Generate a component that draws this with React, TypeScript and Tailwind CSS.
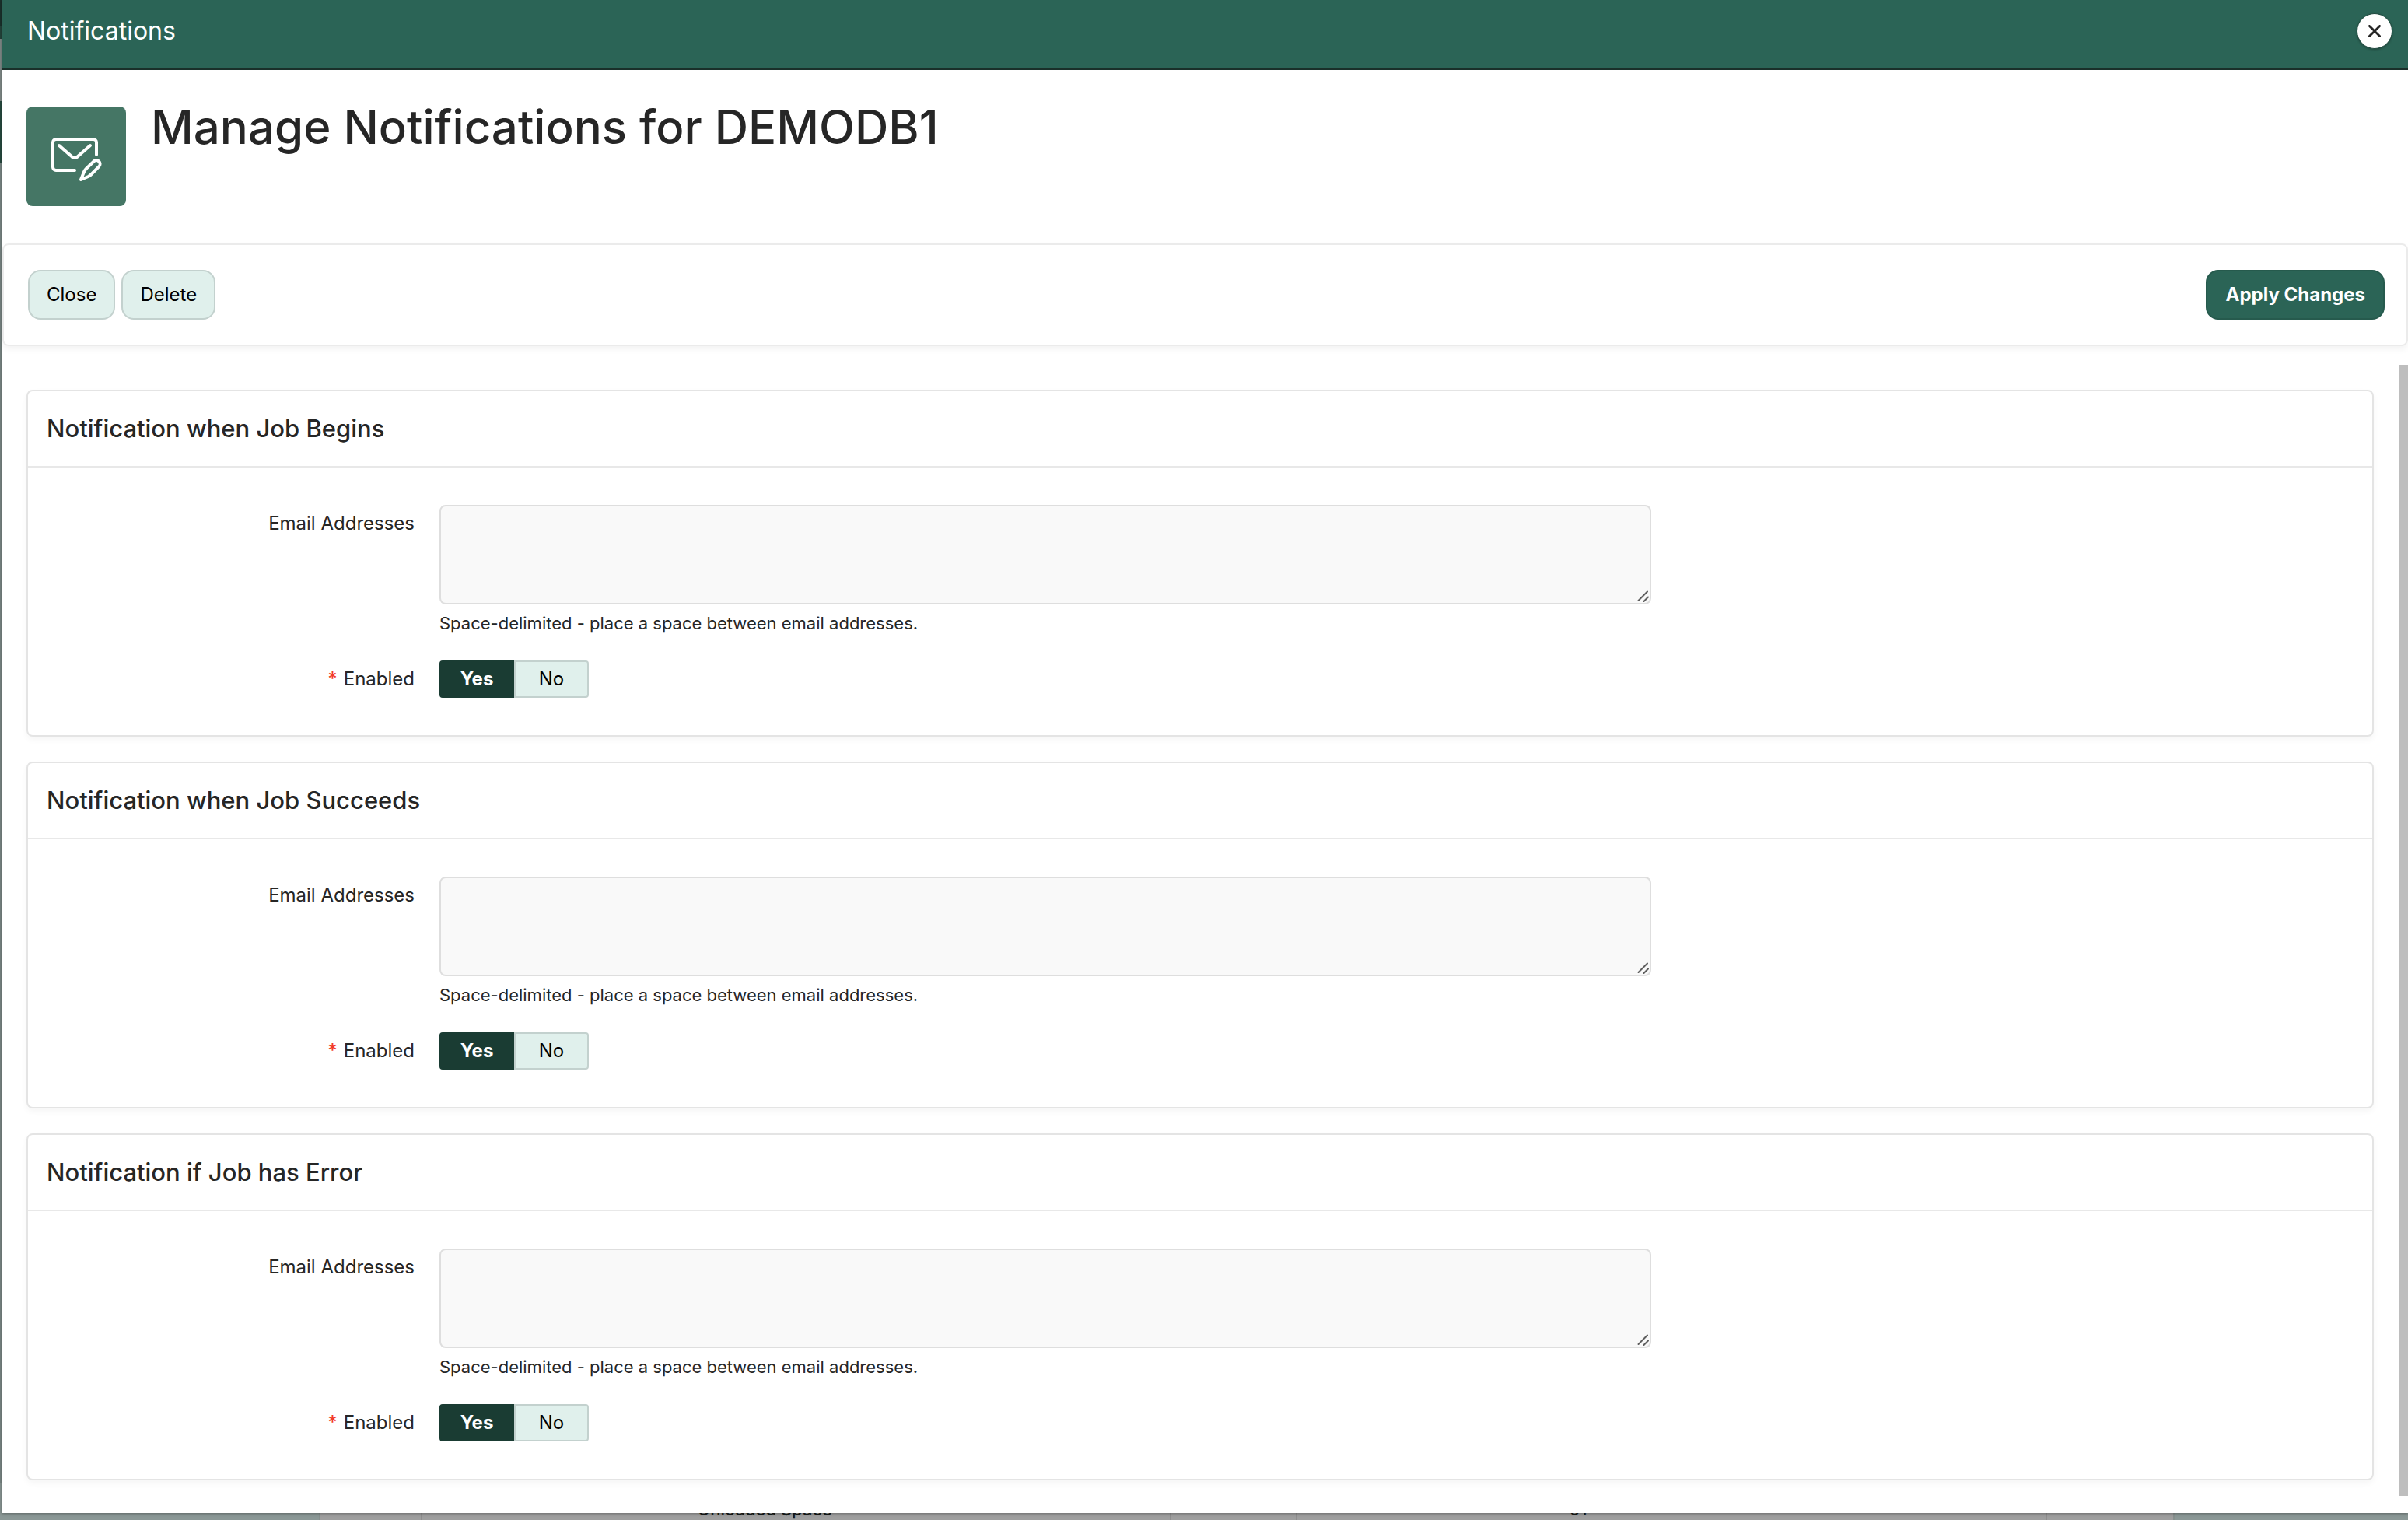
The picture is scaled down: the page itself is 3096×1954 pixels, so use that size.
import React, { useState } from "react";

const sections = [
  { id: "begins", title: "Notification when Job Begins" },
  { id: "succeeds", title: "Notification when Job Succeeds" },
  { id: "error", title: "Notification if Job has Error" },
];

function HeroIcon() {
  return (
    <div className="mt-2 size-32 shrink-0 rounded-lg bg-[#457665]">
      <svg
        viewBox="0 0 128 128"
        className="size-32"
        fill="none"
        stroke="white"
        strokeWidth="4"
        strokeLinecap="round"
        strokeLinejoin="round"
        aria-hidden="true"
      >
        <path d="M62 82H38a4 4 0 0 1-4-4V46a4 4 0 0 1 4-4H86a4 4 0 0 1 4 4V62" />
        <path d="M42 50L58.500 64.600Q62 67.400 65.500 64.600L82 50" />
        <path d="M70 94L73.800 84.500Q74.800 82 76.700 80L86.500 70.500A4.700 4.700 0 0 1 93.200 77.200L83.500 87Q81.500 89 79.500 90Z" />
      </svg>
    </div>
  );
}

function YesNo({ id }: { id: string }) {
  const [on, setOn] = useState(true);
  const item =
    "flex h-12 w-24 cursor-pointer items-center justify-center border-2 text-2xl has-focus-visible:outline-2";
  const active = "border-[#1a3c33] bg-[#1a3c33] font-bold text-white";
  const idle = "border-[#c3d1ce] bg-[#e0f0ec] text-black";
  return (
    <div role="radiogroup" aria-labelledby={`${id}-enabled`} className="relative flex">
      <label className={`${item} rounded-l ${on ? active : idle}`}>
        <input type="radio" name={id} className="sr-only" checked={on} onChange={() => setOn(true)} />
        Yes
      </label>
      <label className={`${item} rounded-r ${on ? idle : active}`}>
        <input type="radio" name={id} className="sr-only" checked={!on} onChange={() => setOn(false)} />
        No
      </label>
    </div>
  );
}

function Section({ id, title }: { id: string; title: string }) {
  return (
    <section className="rounded-lg border-2 border-[#e4e4e4] bg-white shadow-[0_4px_8px_rgba(0,0,0,0.04)]">
      <h2 className="border-b-2 border-[#e8e8e8] px-6 py-6 text-[31px] leading-12 font-medium">{title}</h2>
      <div className="grid grid-cols-[1fr_5fr] gap-x-8 gap-y-8 py-12">
        <label htmlFor={`${id}-emails`} className="pt-1.5 text-right text-2xl leading-9">
          Email Addresses
        </label>
        <div>
          <div className="relative w-[1558px] max-w-full">
            <textarea
              id={`${id}-emails`}
              aria-describedby={`${id}-help`}
              className="block h-32 w-full resize-none rounded-lg border-2 border-[#dedede] bg-[#f9f9f9] px-4 py-2 text-2xl"
            />
            <svg
              viewBox="0 0 16 16"
              className="pointer-events-none absolute right-0.5 bottom-0.5 size-4"
              fill="none"
              stroke="#5f5f5f"
              strokeWidth="2"
              strokeLinecap="round"
              aria-hidden="true"
            >
              <path d="M1.500 13L13 1.500M8.500 14L14 8.500" />
            </svg>
          </div>
          <p id={`${id}-help`} className="mt-2 text-[22px] leading-8">
            Space-delimited - place a space between email addresses.
          </p>
        </div>
        <div id={`${id}-enabled`} className="flex items-center justify-end gap-2 text-2xl">
          <span className="font-medium text-[#f23a2c]">*</span>
          Enabled
        </div>
        <YesNo id={id} />
      </div>
    </section>
  );
}

/* The page behind the dialog, dimmed; only its edges show. */
function Backdrop() {
  return (
    <div aria-hidden="true" className="absolute inset-0 flex flex-col bg-[#7c8986]">
      <div className="h-[34px] bg-[#1b322c]" />
      <div className="h-4 bg-[#25443b]" />
      <div className="h-20 bg-[#828c8a]" />
      <div className="h-20 bg-[#274b40]" />
      <div className="flex-1" />
      <div className="flex h-12 bg-[#8b9896] text-[22px] font-medium text-[#171b1a]">
        <div className="w-[410px]" />
        <div className="grid flex-1 grid-cols-[131fr_965fr_162fr_966fr_162fr] divide-x-2 divide-[#8f8f8f] border-x-2 border-[#87908e] bg-[#9f9f9f] text-center leading-6 *:flex *:items-end *:justify-center *:pb-0.5">
          <div />
          <div className="pr-20">Unloaded Space</div>
          <div />
          <div className="pr-60">01</div>
          <div />
        </div>
        <div className="w-[300px]" />
      </div>
    </div>
  );
}

export default function App() {
  return (
    <div className="relative min-h-screen bg-[#8b9896] pb-[9px] pl-[3px] font-['Inter',sans-serif] text-[#262626]">
      <Backdrop />
      <div
        role="dialog"
        aria-labelledby="dialog-title"
        className="relative bg-white shadow-[0_0_4px_1px_rgba(0,0,0,0.35)]"
      >
        <header className="flex h-[90px] items-center justify-between border-b-2 border-[#1a302a] bg-[#2b6456] pr-5 pb-2 pl-8 text-white">
          <h2 id="dialog-title" className="text-[32px] leading-10">
            Notifications
          </h2>
          <button
            type="button"
            aria-label="Close dialog"
            className="flex size-[46px] cursor-pointer items-center justify-center rounded-full border border-[#1d473c] bg-white shadow-[0_1px_3px_rgba(0,0,0,0.3)]"
          >
            <svg
              viewBox="0 0 16 16"
              className="size-4"
              fill="none"
              stroke="#262626"
              strokeWidth="2.800"
              strokeLinecap="round"
              aria-hidden="true"
            >
              <path d="M1.400 1.400L14.600 14.600M14.600 1.400L1.400 14.600" />
            </svg>
          </button>
        </header>

        <div className="flex items-start gap-8 pt-[39px] pb-12 pl-[31px]">
          <HeroIcon />
          <h1 className="text-[60px] leading-17 font-medium">Manage Notifications for DEMODB1</h1>
        </div>

        <div className="flex items-center justify-between rounded-lg border-2 border-[#ebebeb] px-[31px] py-8 pr-7 shadow-[0_4px_8px_rgba(0,0,0,0.05)]">
          <div className="flex gap-2">
            <button
              type="button"
              className="h-16 cursor-pointer rounded-2xl border-2 border-[#c3d1ce] bg-[#e0f0ec] px-[22px] text-2xl text-black"
            >
              Close
            </button>
            <button
              type="button"
              className="h-16 cursor-pointer rounded-2xl border-2 border-[#c3d1ce] bg-[#e0f0ec] px-[22px] text-2xl text-black"
            >
              Delete
            </button>
          </div>
          <button
            type="button"
            className="h-16 cursor-pointer rounded-2xl border-2 border-[#265a4d] bg-[#2b6456] px-[23px] text-2xl font-bold text-white"
          >
            Apply Changes
          </button>
        </div>

        <div className="flex">
          <main className="flex flex-1 flex-col gap-8 pt-14 pr-8 pb-[42px] pl-[31px]">
            {sections.map((s) => (
              <Section key={s.id} {...s} />
            ))}
          </main>
          <div className="mt-6 mb-[22px] w-3 bg-[#bebebe]" />
        </div>
      </div>
    </div>
  );
}
